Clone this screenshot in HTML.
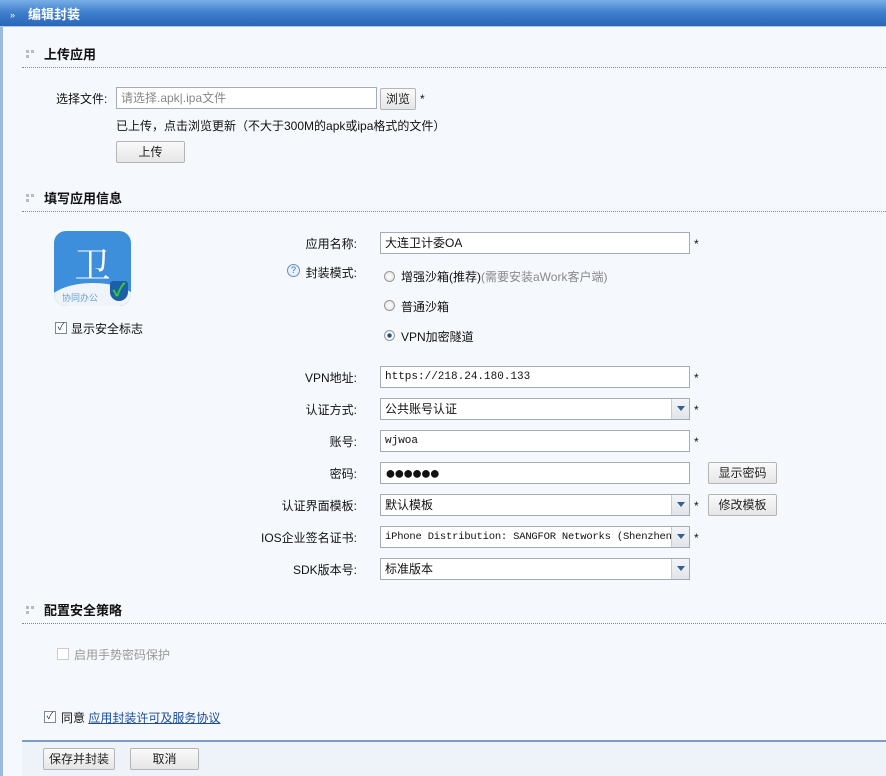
<!DOCTYPE html>
<html><head><meta charset="utf-8"><style>
*{margin:0;padding:0;box-sizing:border-box}
body{width:886px;height:776px;overflow:hidden;background:#f5f8fc;font-family:"Liberation Sans","Noto Sans CJK SC",sans-serif;font-size:12px;color:#111;position:relative}
.a{position:absolute;white-space:nowrap;line-height:14px}
.hdr{position:absolute;left:0;top:0;width:886px;height:27px;background:linear-gradient(#7aaee6,#3d7dcc 50%,#2a67b8);border-bottom:1px solid #a9c9ee}
.lb{position:absolute;left:0;top:27px;width:3px;height:749px;background:#9db9dc}
.sec{position:absolute;left:44px;font-weight:bold;font-size:13px}
.blt{position:absolute;left:26px;width:10px;height:10px}
.blt i{position:absolute;width:3px;height:3px;background:#bbb}
.dl{position:absolute;left:22px;width:864px;border-top:1px dotted #888}
.in{position:absolute;height:22px;border:1px solid #a5acb5;background:#fff;padding-left:4px;line-height:20px;font-size:12px}
.btn{position:absolute;height:22px;border:1px solid #b5b5b5;border-radius:2px;background:linear-gradient(#fafafa,#e6e6e6);text-align:center;line-height:20px;color:#222}
.arr{position:absolute;right:0;top:0;width:18px;height:20px;background:linear-gradient(#f4f6f8,#dfe4ea);border-left:1px solid #ccc}
.arr:after{content:"";position:absolute;left:5px;top:7px;border:4px solid transparent;border-top:5px solid #3a5e8a}
.lab{position:absolute;width:200px;left:157px;text-align:right}
.st{position:absolute;font-size:12px}
.rd{position:absolute;left:384px;width:11px;height:11px;border-radius:50%;border:1px solid #999;background:radial-gradient(#fff,#ddd)}
.cb{position:absolute;width:12px;height:12px;border:1px solid #7a8a99;background:#fff;font-size:10px;line-height:10px;text-align:center;color:#235}
</style></head><body>
<div class="hdr"></div>
<div class="a" style="left:10px;top:8px;color:#fff;font-size:9px">»</div>
<div class="a" style="left:28px;top:8px;color:#fff;font-weight:bold;font-size:13px">编辑封装</div>
<div class="lb"></div>

<div class="blt" style="top:50px"><i style="left:0;top:0"></i><i style="left:5px;top:0"></i><i style="left:0;top:5px"></i></div>
<div class="sec a" style="top:48px">上传应用</div>
<div class="dl" style="top:67px"></div>
<div class="a" style="left:56px;top:92px">选择文件:</div>
<div class="in" style="left:116px;top:87px;width:261px;color:#888">请选择.apk|.ipa文件</div>
<div class="btn" style="left:380px;top:88px;width:36px">浏览</div>
<div class="st" style="left:420px;top:92px">*</div>
<div class="a" style="left:116px;top:119px">已上传，点击浏览更新（不大于300M的apk或ipa格式的文件）</div>
<div class="btn" style="left:116px;top:141px;width:69px">上传</div>

<div class="blt" style="top:194px"><i style="left:0;top:0"></i><i style="left:5px;top:0"></i><i style="left:0;top:5px"></i></div>
<div class="sec a" style="top:192px">填写应用信息</div>
<div class="dl" style="top:211px"></div>

<div style="position:absolute;left:54px;top:231px;width:77px;height:75px;border-radius:12px;background:#3d8fdc;overflow:hidden">
<div style="position:absolute;left:0;top:15px;width:77px;text-align:center;color:#fff;font-size:36px;line-height:36px;font-family:'Noto Serif CJK SC',serif">卫</div>
<div style="position:absolute;left:-6px;top:52px;width:90px;height:40px;border-radius:50%;background:#eef4fa"></div>
<div style="position:absolute;left:8px;top:60px;font-size:9px;color:#6a9fd0">协同办公</div>
<div style="position:absolute;left:56px;top:50px;width:18px;height:20px;border-radius:3px 3px 9px 9px;background:#1d5fa8;color:#3c3;font-size:18px;line-height:18px;text-align:center;font-weight:bold">✓</div>
</div>
<div class="cb" style="left:55px;top:322px">✓</div>
<div class="a" style="left:71px;top:322px">显示安全标志</div>

<div class="lab a" style="top:237px">应用名称:</div>
<div class="in" style="left:380px;top:232px;width:310px">大连卫计委OA</div>
<div class="st" style="left:694px;top:237px">*</div>
<div style="position:absolute;left:287px;top:264px;width:13px;height:13px;border-radius:50%;border:1px solid #6a8fb8;background:#e8f0fa;color:#4a70a0;font-size:9px;text-align:center;line-height:11px">?</div>
<div class="lab a" style="top:266px">封装模式:</div>
<div class="rd" style="top:271px"></div>
<div class="a" style="left:401px;top:270px">增强沙箱(推荐)<span style="color:#888">(需要安装aWork客户端)</span></div>
<div class="rd" style="top:300px"></div>
<div class="a" style="left:401px;top:300px">普通沙箱</div>
<div class="rd" style="top:330px;background:radial-gradient(#1a3a6a 0,#2b5c9c 30%,#fff 40%,#ddd)"></div>
<div class="a" style="left:401px;top:330px">VPN加密隧道</div>

<div class="lab a" style="top:371px">VPN地址:</div>
<div class="in" style="left:380px;top:366px;width:310px;font-family:'Liberation Mono',monospace;font-size:11px">https://218.24.180.133</div>
<div class="st" style="left:694px;top:371px">*</div>
<div class="lab a" style="top:403px">认证方式:</div>
<div class="in" style="left:380px;top:398px;width:310px">公共账号认证<div class="arr"></div></div>
<div class="st" style="left:694px;top:403px">*</div>
<div class="lab a" style="top:435px">账号:</div>
<div class="in" style="left:380px;top:430px;width:310px;font-family:'Liberation Mono',monospace;font-size:11px">wjwoa</div>
<div class="st" style="left:694px;top:435px">*</div>
<div class="lab a" style="top:467px">密码:</div>
<div class="in" style="left:380px;top:462px;width:310px;font-size:18px;letter-spacing:-2px">●●●●●●</div>
<div class="btn" style="left:708px;top:462px;width:69px">显示密码</div>
<div class="lab a" style="top:499px">认证界面模板:</div>
<div class="in" style="left:380px;top:494px;width:310px">默认模板<div class="arr"></div></div>
<div class="st" style="left:694px;top:499px">*</div>
<div class="btn" style="left:708px;top:494px;width:69px">修改模板</div>
<div class="lab a" style="top:531px">IOS企业签名证书:</div>
<div class="in" style="left:380px;top:526px;width:310px;font-family:'Liberation Mono',monospace;font-size:10.5px;overflow:hidden;letter-spacing:-0.2px">iPhone Distribution: SANGFOR Networks (Shenzhen)<div class="arr"></div></div>
<div class="st" style="left:694px;top:531px">*</div>
<div class="lab a" style="top:563px">SDK版本号:</div>
<div class="in" style="left:380px;top:558px;width:310px">标准版本<div class="arr"></div></div>

<div class="blt" style="top:606px"><i style="left:0;top:0"></i><i style="left:5px;top:0"></i><i style="left:0;top:5px"></i></div>
<div class="sec a" style="top:604px">配置安全策略</div>
<div class="dl" style="top:623px"></div>
<div class="cb" style="left:57px;top:648px;border-color:#ccc"></div>
<div class="a" style="left:74px;top:648px;color:#999">启用手势密码保护</div>

<div class="cb" style="left:44px;top:711px">✓</div>
<div class="a" style="left:61px;top:711px">同意 <span style="color:#1a4c9a;text-decoration:underline">应用封装许可及服务协议</span></div>
<div style="position:absolute;left:22px;top:740px;width:864px;height:36px;background:#eef3fa;border-top:2px solid #7f9cc4"></div>
<div class="btn" style="left:43px;top:748px;width:72px">保存并封装</div>
<div class="btn" style="left:130px;top:748px;width:69px">取消</div>
</body></html>
